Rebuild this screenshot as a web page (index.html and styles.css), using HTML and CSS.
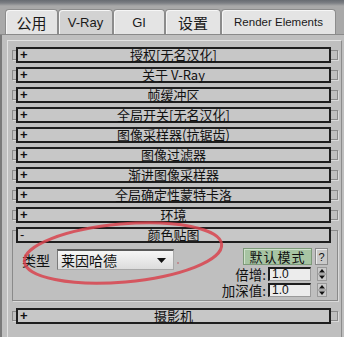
FILE: index.html
```html
<!DOCTYPE html>
<html lang="zh-CN">

<head>
    <meta charset="UTF-8">
    <meta name="viewport" content="width=device-width, initial-scale=1.0">
    <title>V-Ray</title>
    <link rel="stylesheet" href="styles.css">
</head>

<body>
    <div class="app">
        <div class="tabs">
            <div class="tab tab-cjk tab-common">公用</div>
            <div class="tab active tab-vray">V-Ray</div>
            <div class="tab tab-gi">GI</div>
            <div class="tab tab-cjk tab-settings">设置</div>
            <div class="tab tab-render">Render Elements</div>
        </div>

        <div class="panel">
            <div class="frame">
                <div class="rollout"><div class="bar"><span class="sign">+</span><span class="title">授权[无名汉化]</span></div></div>
                <div class="rollout"><div class="bar"><span class="sign">+</span><span class="title">关于 V-Ray</span></div></div>
                <div class="rollout"><div class="bar"><span class="sign">+</span><span class="title">帧缓冲区</span></div></div>
                <div class="rollout"><div class="bar"><span class="sign">+</span><span class="title">全局开关[无名汉化]</span></div></div>
                <div class="rollout"><div class="bar"><span class="sign">+</span><span class="title">图像采样器(抗锯齿)</span></div></div>
                <div class="rollout"><div class="bar"><span class="sign">+</span><span class="title">图像过滤器</span></div></div>
                <div class="rollout"><div class="bar"><span class="sign">+</span><span class="title">渐进图像采样器</span></div></div>
                <div class="rollout"><div class="bar"><span class="sign">+</span><span class="title">全局确定性蒙特卡洛</span></div></div>
                <div class="rollout"><div class="bar"><span class="sign">+</span><span class="title">环境</span></div></div>

                <div class="rollout open">
                    <div class="bar"><span class="sign minus">-</span><span class="title">颜色贴图</span></div>
                    <div class="rollout-body">
                        <div class="map-type">
                            <span class="label">类型</span>
                            <div class="dropdown">
                                <span>莱因哈德</span>
                                <svg class="arrow" width="9" height="5" viewBox="0 0 9 5"><path d="M0 0H9L4.5 5Z" fill="#111"/></svg>
                            </div>
                        </div>
                        <div class="map-controls">
                            <div class="btn-row">
                                <div class="btn-default">默认模式</div>
                                <div class="btn-help">?</div>
                            </div>
                            <div class="spin-row">
                                <span class="label">倍增:</span>
                                <div class="field">1.0</div>
                                <div class="spinner">
                                    <svg width="10" height="14" viewBox="0 0 10 14"><path d="M2 5.5H8L5 2Z" fill="#111"/><path d="M1 7H9" stroke="#8a8a8a"/><path d="M2 8.5H8L5 12Z" fill="#111"/></svg>
                                </div>
                            </div>
                            <div class="spin-row">
                                <span class="label">加深值:</span>
                                <div class="field">1.0</div>
                                <div class="spinner">
                                    <svg width="10" height="14" viewBox="0 0 10 14"><path d="M2 5.5H8L5 2Z" fill="#111"/><path d="M1 7H9" stroke="#8a8a8a"/><path d="M2 8.5H8L5 12Z" fill="#111"/></svg>
                                </div>
                            </div>
                        </div>
                    </div>
                </div>

                <div class="rollout"><div class="bar"><span class="sign">+</span><span class="title">摄影机</span></div></div>
            </div>
        </div>

        <!-- red hand-drawn circle over the colour map rollout -->
        <svg class="mark" width="344" height="337" viewBox="0 0 344 337">
            <ellipse cx="123" cy="253" rx="99" ry="29" transform="rotate(-5 123 253)" fill="none" stroke="#d8434d" stroke-width="3" opacity="0.85"/>
            <circle cx="178" cy="263" r="0.8" fill="#c0505a"/>
        </svg>
    </div>
</body>

</html>
```

FILE: styles.css
```css
* {
    box-sizing: border-box;
}

body {
    margin: 0;
    background: #bfbfbf;
    font-family: "Noto Sans CJK SC", "Liberation Sans", sans-serif;
    color: #111;
}

.app {
    position: relative;
    width: 344px;
    height: 337px;
    overflow: hidden;
    background: #bfbfbf;
}

/* tab strip */
.tabs {
    display: flex;
    height: 35px;
    padding: 9px 0 0 5px;
    background: linear-gradient(#676b71 0, #7c7f84 3px, #a9a9a9 6px, #a9a9a9 100%);
    border-bottom: 1px solid #8a8a8a;
}

.tab {
    display: flex;
    align-items: center;
    justify-content: center;
    height: 25px;
    background: #e4e4e4;
    border: 1px solid #8c8c8c;
    border-bottom: none;
    border-radius: 4px 4px 0 0;
    box-shadow: inset 1px 1px 0 #f6f6f6;
    font-family: "Liberation Sans", sans-serif;
    font-size: 13px;
    color: #1a1a1a;
}

.tab-cjk {
    font-family: "Noto Sans CJK SC", sans-serif;
    font-size: 15px;
}

.tab.active {
    background: #d2d2d2;
}

.tab-common { width: 53px; }
.tab-vray { width: 55px; }
.tab-gi { width: 52px; }
.tab-settings { width: 56px; }
.tab-render { width: 115px; font-size: 11.5px; }

/* panel body */
.panel {
    height: 302px;
    padding: 5px 0 0 5px;
    border-left: 2px solid #7a7a7a;
}

.frame {
    width: 335px;
    height: 320px;
    padding: 9px 3px 0 4px;
    border-top: 1px solid #e2e2e2;
    border-left: 1px solid #e2e2e2;
    border-right: 1px solid #8c8c8c;
}

/* rollouts */
.rollout {
    border: 1px solid #8a8a8a;
    box-shadow: 1px 1px 0 #dadada;
    margin-bottom: 10px;
}

.bar {
    display: grid;
    grid-template-columns: 14px 1fr 14px;
    align-items: center;
    height: 16px;
    margin: -4px 6px -4px 3px;
    background: #c7c7c7;
    border: 2px solid #1e1e1e;
    font-size: 13px;
    line-height: 12px;
}

.sign {
    font-family: "Liberation Sans", sans-serif;
    font-weight: bold;
    font-size: 13px;
    padding-left: 2px;
}

.sign.minus {
    font-weight: normal;
}

.title {
    text-align: center;
    white-space: nowrap;
}

.rollout.open .bar {
    margin-bottom: 0;
}

.rollout-body {
    display: flex;
    justify-content: space-between;
    height: 57px;
    padding: 5px 9px 0 9px;
}

.label {
    font-size: 14px;
    white-space: nowrap;
}

.map-type {
    display: flex;
    align-items: center;
    gap: 7px;
    height: 21px;
    margin-top: 1px;
}

.dropdown {
    display: flex;
    align-items: center;
    justify-content: space-between;
    width: 117px;
    height: 21px;
    padding: 0 7px 0 3px;
    background: linear-gradient(#f6f6f6, #dcdcdc);
    border-top: 2px solid #5a5a5a;
    border-left: 1px solid #7a7a7a;
    border-right: 1px solid #a8a8a8;
    border-bottom: 1px solid #a8a8a8;
    font-size: 14px;
}

.map-controls {
    display: flex;
    flex-direction: column;
    align-items: flex-end;
    width: 110px;
}

.btn-row {
    display: flex;
    gap: 3px;
    height: 17px;
}

.btn-default {
    display: flex;
    align-items: center;
    justify-content: center;
    width: 69px;
    background: #a7c4a3;
    border: 1px solid #7d9a79;
    box-shadow: inset 1px 1px 0 #cfe2cc;
    font-size: 13px;
    letter-spacing: 1px;
}

.btn-help {
    display: flex;
    align-items: center;
    justify-content: center;
    width: 13px;
    background: #c9c9c9;
    border: 1px solid #8a8a8a;
    box-shadow: inset 1px 1px 0 #ececec;
    font-family: "Liberation Sans", sans-serif;
    font-size: 11px;
}

.spin-row {
    display: flex;
    align-items: center;
    height: 14px;
    margin-top: 2px;
}

.spin-row .label {
    margin-right: 2px;
    font-size: 13.5px;
    line-height: 14px;
}

.field {
    width: 43px;
    height: 14px;
    padding-left: 2px;
    background: #ececec;
    border-top: 2px solid #1e1e1e;
    border-left: 2px solid #1e1e1e;
    border-right: 1px solid #9a9a9a;
    border-bottom: 1px solid #9a9a9a;
    font-family: "Liberation Sans", sans-serif;
    font-size: 12px;
    line-height: 11px;
}

.spinner {
    display: flex;
    width: 10px;
    height: 14px;
    margin: 0 1px 0 6px;
    background: #cacaca;
    box-shadow: inset 0 0 0 1px #9a9a9a;
}

/* annotation drawn over the screenshot */
.mark {
    position: absolute;
    left: 0;
    top: 0;
    pointer-events: none;
}
```
